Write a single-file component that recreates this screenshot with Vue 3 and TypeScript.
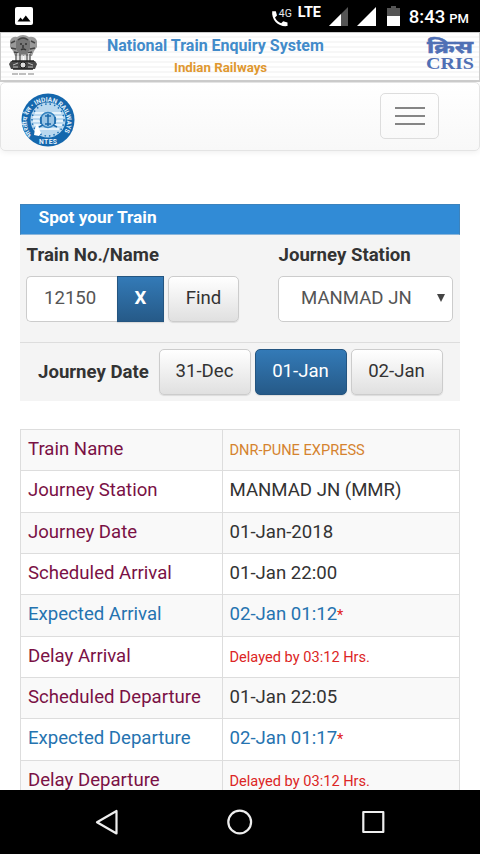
<template>
  <div class="screen">
    <!-- status bar -->
    <div class="status-bar">
      <svg class="picture-icon" viewBox="0 0 18 18">
        <rect width="18" height="18" rx="2" fill="#fff" />
        <path d="M2.5 14.5l3-4 2 2.2 3.3-4.2 4.7 6z" fill="#000" />
      </svg>
      <div class="status-right">
        <svg class="call-icon" viewBox="0 0 22 22">
          <path d="M1.2 4.200h3.600l1.200 4.300-2 1.900c1.300 3 3.200 4.600 6.200 5.900l2-2 4.300 1.200v3.600c-8.500 1.300-16.300-5.900-15.300-14.900z" fill="#fff" />
          <text x="7.800" y="10" font-size="11" fill="#e8e8e8" textLength="13" lengthAdjust="spacingAndGlyphs">4G</text>
        </svg>
        <span class="lte">LTE</span>
        <svg class="signal weak" viewBox="0 0 19 19">
          <path d="M19 0v19H0z" fill="#555" />
          <path d="M12 7v12H0z" fill="#fff" />
        </svg>
        <svg class="signal" viewBox="0 0 19 19">
          <path d="M19 0v19H0z" fill="#fff" />
        </svg>
        <svg class="battery" viewBox="0 0 13 20">
          <path d="M4 0h5v2h4v9H0V2h4z" fill="#555" />
          <path d="M0 10h13v10H0z" fill="#fff" />
        </svg>
        <span class="clock">8:43</span>
        <span class="pm">PM</span>
      </div>
    </div>

    <!-- page header -->
    <header class="site-header">
      <svg class="emblem" viewBox="0 0 30 44">
        <path d="M2 7q2-5 7-4 6-4 12 0 6-1 8 4v6l-3 4-2 5H7l-2-5-3-4z" fill="#9a9a9a" />
        <path d="M8 7q7-8 14 0v8l-3 5h-8l-3-5z" fill="#777" />
        <path d="M10 6q5-4 10 0M3 9l4-2M27 9l-4-2M3 14l5 1M27 14l-5 1M6 18l4 1M24 18l-4 1" stroke="#444" stroke-width="1.500" fill="none" />
        <path d="M12 10h2M17 10h2M13 16q2-2 5 0M15 11v3" stroke="#333" stroke-width="1.400" fill="none" />
        <path d="M10 19v9M14 21v7M17 21v7M21 19v9" stroke="#ddd" stroke-width="1.500" />
        <path d="M8 20v8M12 20v8M19 20v8M22 20v8" stroke="#666" stroke-width="1.500" />
        <path d="M3 27h24l2 3-2 5H3l-2-5z" fill="#484848" />
        <path d="M4 27h22M5 35h20" stroke="#222" stroke-width="1.500" />
        <circle cx="15" cy="31" r="3" fill="#ddd" stroke="#222" />
        <path d="M5 31l5-2M5 33h5M20 29l5 2M20 33h5" stroke="#bbb" />
        <path d="M4 40h6M11 40h7M20 40h6" stroke="#aaa" stroke-width="1.500" />
      </svg>
      <div class="titles">
        <div class="title">National Train Enquiry System</div>
        <div class="subtitle">Indian Railways</div>
      </div>
      <svg class="cris" viewBox="0 0 50 44">
        <text x="1" y="18" class="cris-hindi" textLength="46" lengthAdjust="spacingAndGlyphs">क्रिस</text>
        <text x="0" y="33.500" class="cris-latin" textLength="48" lengthAdjust="spacingAndGlyphs">CRIS</text>
      </svg>
    </header>

    <nav class="navbar">
      <svg class="ntes-logo" viewBox="0 0 54 54">
        <defs>
          <path id="ring" d="M11.500 42.500A20 20 0 1 1 44 37.500" />
        </defs>
        <circle cx="27" cy="27" r="26.500" fill="#1467ad" />
        <circle cx="27" cy="27" r="17.500" fill="#b9d8ef" />
        <circle cx="27" cy="27" r="16" fill="none" stroke="#1c6fb4" stroke-width="1.500" stroke-dasharray="1.500 3" />
        <path d="M14 20h26M12 24h30M12 28h30M13 32h28M16 36h22" stroke="#f4faff" stroke-width="1.400" />
        <circle cx="27" cy="27" r="7.500" fill="#9bc5e5" stroke="#3382bf" stroke-width="1.600" />
        <path d="M27 21v12M24 23h6M24 31h6M20 24v7M34 24v7M18 34l4-2M36 34l-4-2" stroke="#1b69ab" stroke-width="1.500" />
        <path d="M13 42l1-6 2-5 2 5 2 4-2 3z" fill="#fff" />
        <text class="ring-text"><textPath href="#ring" textLength="88">भारतीय रेल • INDIAN RAILWAYS</textPath></text>
        <text x="27" y="51" text-anchor="middle" class="ntes-text" textLength="18">NTES</text>
      </svg>
      <button class="menu-button" aria-label="Menu">
        <span v-for="n in 3" :key="n" class="bar"></span>
      </button>
    </nav>

    <main class="content">
      <!-- search panel -->
      <section class="panel">
        <h3 class="panel-title">Spot your Train</h3>
        <div class="search-row">
          <div class="field">
            <label>Train No./Name</label>
            <div class="controls">
              <input v-model="trainNo" class="train-input" />
              <button class="btn primary clear" @click="trainNo = ''">X</button>
              <button class="btn find">Find</button>
            </div>
          </div>
          <div class="field">
            <label>Journey Station</label>
            <div class="station-select">
              <span>{{ station }}</span>
              <i class="arrow"></i>
            </div>
          </div>
        </div>
        <div class="date-row">
          <label>Journey Date</label>
          <button
            v-for="d in dates"
            :key="d"
            class="btn date"
            :class="{ primary: d === selectedDate }"
            @click="selectedDate = d"
          >{{ d }}</button>
        </div>
      </section>

      <!-- train status -->
      <div class="status-table">
        <div v-for="row in rows" :key="row.label" class="row">
          <div class="cell" :class="row.expected ? 'blue' : 'maroon'">{{ row.label }}</div>
          <div class="cell value" :class="row.type">
            <span>{{ row.value }}</span><span v-if="row.expected" class="star">*</span>
          </div>
        </div>
      </div>
    </main>

    <!-- android navigation -->
    <div class="nav-keys">
      <svg viewBox="0 0 480 64">
        <g fill="none" stroke="#eee" stroke-width="2.200" stroke-linejoin="round">
          <path d="M116.500 21v22.500L97 32.200z" />
          <circle cx="239.700" cy="32" r="11.400" />
          <path d="M363.300 22h20v20h-20z" />
        </g>
      </svg>
    </div>
  </div>
</template>

<script setup lang="ts">
import { ref } from 'vue'

interface Row {
  label: string
  value: string
  type?: string
  expected?: boolean
}

const trainNo = ref('12150')
const station = ref('MANMAD JN')
const dates = ['31-Dec', '01-Jan', '02-Jan']
const selectedDate = ref('01-Jan')

const rows: Row[] = [
  { label: 'Train Name', value: 'DNR-PUNE EXPRESS', type: 'orange' },
  { label: 'Journey Station', value: 'MANMAD JN (MMR)' },
  { label: 'Journey Date', value: '01-Jan-2018' },
  { label: 'Scheduled Arrival', value: '01-Jan 22:00' },
  { label: 'Expected Arrival', value: '02-Jan 01:12', type: 'blue', expected: true },
  { label: 'Delay Arrival', value: 'Delayed by 03:12 Hrs.', type: 'red' },
  { label: 'Scheduled Departure', value: '01-Jan 22:05' },
  { label: 'Expected Departure', value: '02-Jan 01:17', type: 'blue', expected: true },
  { label: 'Delay Departure', value: 'Delayed by 03:12 Hrs.', type: 'red' }
]
</script>

<style>
body {
  margin: 0;
  background: #fff;
}
</style>

<style scoped>
* {
  box-sizing: border-box;
}

.screen {
  width: 480px;
  height: 854px;
  display: flex;
  flex-direction: column;
  overflow: hidden;
  background: #fff;
  color: #333;
  font-family: Roboto, "Noto Sans", sans-serif;
  font-size: 18.6px;
}

button,
input {
  font-family: inherit;
}

.status-bar {
  flex: none;
  height: 32px;
  padding: 0 11px 0 15px;
  display: flex;
  justify-content: space-between;
  background: #000;
  color: #fff;
}

.picture-icon {
  width: 18px;
  height: 18px;
  margin-top: 7px;
}

.status-right {
  display: flex;
}

.call-icon {
  width: 22px;
  height: 22px;
  margin: 7px 5px 0 0;
}

.lte {
  width: 24px;
  margin: 4px 7px 0 0;
  font-size: 14.4px;
  line-height: 17px;
  font-weight: 700;
}

.signal {
  width: 19px;
  height: 19px;
  margin: 7px 11px 0 0;
}

.signal.weak {
  margin-right: 9px;
}

.battery {
  width: 13px;
  height: 20px;
  margin: 6px 9px 0 0;
}

.clock {
  font-size: 18.6px;
  line-height: 34px;
  font-weight: 500;
}

.pm {
  margin-left: 4px;
  font-size: 13px;
  line-height: 38px;
  font-weight: 500;
}

.site-header {
  flex: none;
  height: 50px;
  padding: 0 3px 0 7px;
  display: flex;
  border: 1px solid #ccc;
  border-bottom: 2px solid #cfcfcf;
  background: repeating-linear-gradient(#fff 0, #fff 3px, #f7f7f7 3px, #f7f7f7 5px);
}

.emblem {
  width: 30px;
  height: 44px;
  margin-top: 1px;
}

.titles {
  margin-left: 69px;
  font-weight: 700;
}

.title {
  margin-top: 2px;
  font-size: 16px;
  line-height: 21px;
  color: #428bca;
}

.subtitle {
  margin-top: 2px;
  padding-left: 67px;
  font-size: 13.3px;
  line-height: 20px;
  color: #e0982f;
}

.cris {
  width: 50px;
  height: 44px;
  margin: 2px 0 0 auto;
}

.cris-hindi {
  font-family: "Noto Sans", "Noto Sans Devanagari", sans-serif;
  font-size: 17px;
  font-weight: 700;
  fill: #5070b5;
  stroke: #5070b5;
  stroke-width: 0.5;
}

.cris-latin {
  font-family: "Liberation Serif", serif;
  font-size: 17px;
  font-weight: 700;
  fill: #5070b5;
}

.navbar {
  flex: none;
  height: 69px;
  padding: 0 40px 0 20px;
  display: flex;
  justify-content: space-between;
  border: 1px solid #e4e4e4;
  border-radius: 5px;
  background: linear-gradient(#fff, #f8f8f8);
  box-shadow: 0 1px 6px rgba(0, 0, 0, 0.075);
}

.ntes-logo {
  width: 54px;
  height: 54px;
  margin-top: 10px;
}

.ring-text {
  font-size: 6.5px;
  font-weight: 700;
  fill: #e4f2fc;
}

.ntes-text {
  font-size: 6.8px;
  font-weight: 700;
  fill: #e4f2fc;
}

.menu-button {
  width: 59px;
  height: 46px;
  margin-top: 10px;
  padding: 0;
  display: flex;
  flex-direction: column;
  align-items: center;
  justify-content: center;
  gap: 6px;
  border: 1.5px solid #ddd;
  border-radius: 5px;
  background: transparent;
}

.bar {
  width: 30px;
  height: 2px;
  background: #858585;
}

.content {
  flex: 1;
  min-height: 0;
  padding: 53px 20px 0;
  overflow: hidden;
}

.panel {
  height: 197px;
  background: #f4f4f4;
}

.panel-title {
  height: 31px;
  margin: 0;
  padding-left: 17.5px;
  border: 1px solid #3c83bd;
  border-bottom-color: #8ab5da;
  background: #318bd6;
  color: #fff;
  font-size: 17.3px;
  line-height: 24px;
  font-weight: 700;
}

.search-row {
  height: 108px;
  padding: 8px 7px 0 6px;
  display: flex;
  justify-content: space-between;
  border-bottom: 1px solid #ddd;
}

.field label {
  display: block;
  height: 33px;
  padding-left: 0.5px;
  line-height: 24px;
  font-weight: 700;
}

.controls {
  display: flex;
}

.train-input {
  width: 91px;
  height: 46px;
  padding: 0 0 2px 17px;
  border: 1.5px solid #ccc;
  border-right: 0;
  border-radius: 5px 0 0 5px;
  outline: none;
  background: #fff;
  color: #555;
  font-size: 18.6px;
}

.btn {
  height: 46px;
  padding: 0 0 3px;
  border: 1px solid #ccc;
  border-radius: 5px;
  background: linear-gradient(#fff, #e0e0e0);
  box-shadow: 0 1px 1px rgba(0, 0, 0, 0.1);
  color: #333;
  font-size: 18.6px;
}

.btn.primary {
  border-color: #245580;
  background: linear-gradient(#337ab7, #265a88);
  color: #fff;
}

.btn.clear {
  width: 47px;
  border-radius: 0;
  font-weight: 700;
}

.btn.find {
  width: 71px;
  margin-left: 4px;
}

.station-select {
  width: 175px;
  height: 46px;
  padding: 0 7px 2px 22px;
  display: flex;
  align-items: center;
  justify-content: space-between;
  border: 1.5px solid #ccc;
  border-radius: 5px;
  background: #fff;
  color: #555;
}

.arrow {
  border: 4px solid transparent;
  border-top: 8px solid #444;
  border-bottom: 0;
}

.date-row {
  padding: 6px 0 0 18px;
  display: flex;
  align-items: center;
}

.date-row label {
  width: 120.5px;
  font-weight: 700;
}

.btn.date {
  width: 92px;
  margin-right: 4px;
}

.status-table {
  width: 440px;
  margin-top: 28px;
  border: 1px solid #ddd;
  border-bottom: 0;
}

.row {
  height: 41.33px;
  display: flex;
  border-bottom: 1px solid #ddd;
}

.row:nth-child(odd) {
  background: #f9f9f9;
}

.cell {
  width: 200.5px;
  padding-left: 7px;
  line-height: 38px;
  white-space: nowrap;
}

.value {
  width: 237.5px;
  border-left: 1px solid #ddd;
}

.maroon {
  color: #7a1145;
}

.blue {
  color: #2573b0;
}

.orange {
  color: #d5832f;
  font-size: 14.6px;
  line-height: 41px;
}

.red {
  color: #dc2525;
  font-size: 14.6px;
  line-height: 41px;
}

.star {
  color: #e02020;
  font-size: 14.6px;
}

.nav-keys {
  flex: none;
  height: 64px;
  background: #000;
}

.nav-keys svg {
  display: block;
  width: 480px;
  height: 64px;
}
</style>
